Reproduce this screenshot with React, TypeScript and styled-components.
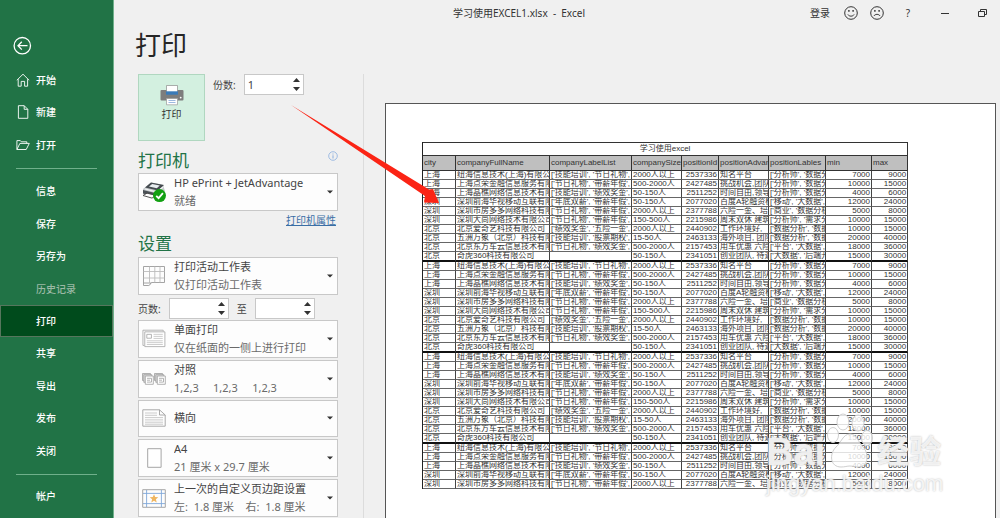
import React from 'react';
import styled, { createGlobalStyle } from 'styled-components';

const GlobalStyle = createGlobalStyle`
  *, *::before, *::after { box-sizing: border-box; }
  body {
    margin: 0;
    background: #f0f0f0;
    color: #444;
    font: 11px/16px "Noto Sans", "Noto Sans CJK SC", sans-serif;
  }
  button, input, select { font: inherit; color: inherit; }
  button { padding: 0; border: 0; background: none; }
`;

const Shell = styled.div`
  display: grid;
  grid-template-columns: 114px minmax(0, 1fr);
  min-height: 100vh;
`;

/* ---------- sidebar ---------- */

const Sidebar = styled.nav`
  display: flex;
  flex-direction: column;
  padding-top: 36px;
  background: #217346;
  border-right: 1px solid #6fb08a;
  color: #fff;
`;

const BackButton = styled.button`
  width: 20px;
  height: 20px;
  margin: 0 0 8px 12px;
  color: #fff;
  svg { display: block; }
`;

const NavGroup = styled.div<{ $height: number }>`
  display: flex;
  flex-direction: column;
  height: ${(p) => p.$height}px;
`;

const NavItem = styled.button<{ $active?: boolean; $muted?: boolean }>`
  flex: 1;
  display: grid;
  grid-template-columns: 14px 1fr;
  gap: 6px;
  align-items: center;
  padding-left: 15px;
  border: 1px solid ${(p) => (p.$active ? '#56765d' : 'transparent')};
  background: ${(p) => (p.$active ? '#004b1c' : 'none')};
  color: ${(p) => (p.$muted ? '#9bb9a5' : '#fff')};
  font-size: 10px;
  font-weight: 500;
  line-height: 14px;
  text-align: left;
`;

const NavRule = styled.hr`
  width: 81px;
  height: 1px;
  margin: 7px 16px 6px;
  border: 0;
  background: #70b08b;
`;

/* ---------- title bar ---------- */

const Main = styled.main`
  position: relative;
  display: flex;
  flex-direction: column;
  min-width: 0;
`;

const TitleBar = styled.header`
  display: flex;
  align-items: center;
  justify-content: space-between;
  height: 26px;
  padding-left: 339px;
  font-size: 10px;
  color: #333;
  white-space: pre;
`;

const WindowControls = styled.div`
  display: flex;
  align-items: center;
`;

const BarButton = styled.button<{ $width: number }>`
  display: flex;
  align-items: center;
  justify-content: center;
  width: ${(p) => p.$width}px;
  height: 26px;
`;

const PageTitle = styled.h1`
  margin: 0 0 10px 21px;
  height: 38px;
  color: #262626;
  font-size: 26px;
  font-weight: 400;
  line-height: 38px;
`;

const Workspace = styled.div`
  flex: 1;
  display: flex;
  min-width: 0;
`;

/* ---------- settings column ---------- */

const Settings = styled.section`
  width: 250px;
  flex: none;
  padding: 0 25px 1px 24px;
  border-right: 1px solid #dcdcdc;
`;

const PrintRow = styled.div`
  display: flex;
  align-items: flex-start;
  gap: 8px;
`;

const PrintButton = styled.button`
  display: flex;
  flex-direction: column;
  align-items: center;
  width: 67px;
  height: 67px;
  padding-top: 9px;
  border: 1px solid #b0d7c0;
  background: #d3f0e0;
  color: #333;
  font-size: 10px;
`;

const Field = styled.div`
  display: flex;
  align-items: center;
  gap: 8px;
  font-size: 10px;
`;

const SpinBox = styled.span`
  display: flex;
  width: 60px;
  height: 21px;
  border: 1px solid #c8c8c8;
  background: #fff;
`;

const SpinInput = styled.input`
  flex: 1;
  width: 100%;
  min-width: 0;
  padding: 0 3px;
  border: 0;
  outline: 0;
  background: none;
  font-size: 11px;
`;

const SpinButtons = styled.span`
  display: flex;
  flex-direction: column;
  width: 13px;
  padding: 1px 0;
`;

const SpinButton = styled.button`
  flex: 1;
  display: flex;
  align-items: center;
  justify-content: center;
`;

const SectionHeading = styled.h2`
  display: flex;
  align-items: center;
  justify-content: space-between;
  height: 26px;
  margin: 0;
  color: #217346;
  font-size: 17px;
  font-weight: 400;
  line-height: 26px;
`;

const PrinterHeading = styled(SectionHeading)`
  height: 32px;
  padding-top: 7px;
  svg { margin-bottom: 10px; }
`;

const LinkRow = styled.div`
  height: 20px;
  padding: 1px 2px 0 0;
  text-align: right;
  font-size: 10px;
  a { color: #3a6ea5; text-underline-offset: 1px; }
`;

const PickerBox = styled.div`
  display: grid;
  grid-template-columns: 24px minmax(0, 1fr) 6px;
  gap: 8px;
  align-items: center;
  height: 38px;
  padding: 0 4px 0 3px;
  border: 1px solid #c8c8c8;
  background: #fdfdfd;
  svg { display: block; margin: auto; }
`;

const PickerText = styled.div`
  display: flex;
  flex-direction: column;
  gap: 2px;
`;

const PickerSelect = styled.select`
  appearance: none;
  width: 100%;
  height: 16px;
  padding: 0;
  border: 0;
  outline: 0;
  background: none;
  line-height: 16px;
`;

const PickerNote = styled.span`
  color: #6a6a6a;
  white-space: pre;
`;

const PagesRow = styled(Field)`
  margin: 3px 0 1px;
`;

const PickerStack = styled.div`
  display: grid;
  grid-auto-rows: 1fr;
  gap: 2px;
  height: 197px;
  ${PickerBox} { height: auto; min-height: 0; }
`;

/* ---------- preview ---------- */

const Preview = styled.section`
  flex: 1;
  display: flex;
  min-width: 0;
  padding: 29px 4px 0 21px;
`;

const Paper = styled.div`
  flex: 1;
  min-width: 0;
  padding: 38px 88px 0 36px;
  border: solid #555;
  border-width: 1px 1px 0 1px;
  background: #fff;
`;

const Sheet = styled.table`
  width: 100%;
  table-layout: fixed;
  border-collapse: separate;
  border-spacing: 0;
  border-left: 1px solid #222;
  color: #333;
  font: 8px/8px "Liberation Sans", "Noto Sans CJK SC", sans-serif;
`;

const SheetTitle = styled.th`
  height: 14px;
  padding: 0;
  border: 1px solid #333;
  border-left: 0;
  font-weight: 400;
`;

const HeadCell = styled.th`
  height: 15px;
  padding: 0 1px;
  overflow: hidden;
  border: solid #333;
  border-width: 0 1px 1px 0;
  background: #bfbfbf;
  font-weight: 400;
  text-align: left;
  white-space: nowrap;
`;

const Cell = styled.td<{ $right?: boolean; $last?: boolean }>`
  height: ${(p) => (p.$last ? 10 : 9)}px;
  padding: 0 1px;
  overflow: hidden;
  border: solid #444;
  border-width: 0 1px ${(p) => (p.$last ? 2 : 1)}px 0;
  border-bottom-color: ${(p) => (p.$last ? '#111' : '#666')};
  text-align: ${(p) => (p.$right ? 'right' : 'left')};
  white-space: nowrap;
`;

/* ---------- overlays ---------- */

const Pointer = styled.svg`
  position: absolute;
  left: 176px;
  top: 104px;
  pointer-events: none;
`;

const Watermark = styled.div`
  position: absolute;
  left: 652px;
  top: 410px;
  width: 186px;
  pointer-events: none;
  color: rgba(255, 255, 255, 0.8);
  font-family: "Liberation Sans", "Noto Sans CJK SC", sans-serif;
  text-shadow: 0 0 2px #b5b5b5;
`;

const WatermarkLogo = styled.div`
  display: flex;
  align-items: flex-end;
  height: 60px;
  font-size: 38px;
  font-weight: 700;
  line-height: 36px;
  svg { margin: 0 4px 1px 2px; }
`;

const WatermarkBrand = styled.span`
  font-size: 32px;
`;

const WatermarkUrl = styled.div`
  font-size: 22px;
  line-height: 28px;
`;

/* ---------- icons ---------- */

const stroke = { fill: 'none', stroke: 'currentColor' } as const;

const BackIcon = () => (
  <svg width="20" height="20" viewBox="0 0 20 20" {...stroke} strokeWidth="1.3">
    <circle cx="10.3" cy="9.7" r="8.2" />
    <path d="M15.5 9.7H6M9.8 5.8 6 9.7l3.8 3.9" />
  </svg>
);
const HomeIcon = () => (
  <svg width="14" height="14" viewBox="0 0 14 14" {...stroke} strokeWidth="0.9">
    <path d="M.8 7.3 7 1.2l6.2 6.1M2.2 6.2v7h3V8.4h3.4v4.8h3V6.2" />
  </svg>
);
const FileIcon = () => (
  <svg width="14" height="14" viewBox="0 0 14 14" {...stroke} strokeWidth="0.9">
    <path d="M2.4.7h5.8l3.6 3.6v9H2.4zM8.2.7v3.6h3.6" />
  </svg>
);
const FolderIcon = () => (
  <svg width="14" height="14" viewBox="0 0 14 14" {...stroke} strokeWidth="0.9">
    <path d="M.9 11.5V2.6h3.4l1 1.2h5.5v1.6M.9 11.5l3-6.1h9.4l-3.1 6.1z" />
  </svg>
);
const FaceIcon = ({ sad }: { sad?: boolean }) => (
  <svg width="14" height="14" viewBox="0 0 14 14" {...stroke} strokeWidth="1">
    <circle cx="7" cy="7" r="6.3" />
    <path d={sad ? 'M3.9 10c1.3-2.2 4.9-2.2 6.2 0' : 'M3.9 8.5c1.3 2.2 4.9 2.2 6.2 0'} />
    <path d="M4.9 4v1.7M9.1 4v1.7" strokeWidth="1.4" />
  </svg>
);
const MinimizeIcon = () => (
  <svg width="10" height="10" viewBox="0 0 10 10" {...stroke}>
    <path d="M1 5.5h8" />
  </svg>
);
const RestoreIcon = () => (
  <svg width="10" height="10" viewBox="0 0 10 10" {...stroke}>
    <path d="M1.500 3.500h6v5h-6zM3.500 3V1.500h6v5H8" />
  </svg>
);
const UpIcon = () => (
  <svg width="7" height="4" viewBox="0 0 7 4"><path d="M0 4 3.5 0 7 4z" fill="#333" /></svg>
);
const DownIcon = () => (
  <svg width="7" height="4" viewBox="0 0 7 4"><path d="M0 0h7L3.5 4z" fill="#333" /></svg>
);
const CaretIcon = () => (
  <svg width="6" height="4" viewBox="0 0 6 4"><path d="M0 .5h6L3 3.6z" fill="#333" /></svg>
);
const InfoIcon = () => (
  <svg width="10" height="10" viewBox="0 0 10 10" fill="none" stroke="#8aaede">
    <circle cx="5" cy="5" r="4.3" strokeWidth="0.8" />
    <path d="M5 4.3v3.2M5 2.5v1" />
  </svg>
);
const PrintIcon = () => (
  <svg width="24" height="22" viewBox="0 0 24 22">
    <rect x="0.5" y="6" width="23" height="10.5" rx="1" fill="#7d7d7d" />
    <path d="M6.5 1.5h11v8h-11z" fill="#fff" stroke="#8d8d8d" strokeWidth="0.7" />
    <path d="M6 7.3h12v3.4H6z" fill="#3a7ab8" />
    <path d="M6.5 14.5h11v6.3h-11z" fill="#fff" stroke="#9a9a9a" strokeWidth="0.7" />
    <path d="M8.5 16.5h7M8.5 18.5h7" stroke="#9db9e0" />
    <circle cx="20.7" cy="13.6" r="0.9" fill="#fff" />
  </svg>
);
const DeviceIcon = () => (
  <svg width="24" height="22" viewBox="0 0 24 22">
    <path d="M1 8 9 1.5 21 4l2 6-7 7L1 13z" fill="#c4c8cb" />
    <path d="m3 6.500 6-5L22 4l-6 5.500z" fill="#454b50" />
    <path d="m7 5.600 3.200-2.500 7.600 1.500-3 2.600z" fill="#e8edf0" />
    <path d="m1 9 14 3.400V16L1 12.600z" fill="#4b5156" />
    <path d="m1 14.500 4-2.300 9 2.200-4 2.700z" fill="#fff" stroke="#444" strokeWidth="0.9" />
    <path d="m3 8 12 3 6-5" fill="none" stroke="#f1f3f4" strokeWidth="1.2" />
    <circle cx="17.5" cy="14.6" r="6.5" fill="#12a012" />
    <path d="m14.2 14.8 2.4 2.4 4.3-5" fill="none" stroke="#fff" strokeWidth="1.8" />
  </svg>
);
const SheetIcon = () => (
  <svg width="24" height="22" viewBox="0 0 24 22" fill="none" stroke="#9a9a9a" strokeWidth="0.9">
    <path d="M1.5 20.5V1.5h21v16H9.5c-1 0-1.2 3-2.7 3zM1.5 18h8" />
    <path d="M1.5 6.5h21M1.5 13h21M7.5 1.5V18M12.8 1.5v16M18 1.5v16" stroke="#bcbcbc" />
  </svg>
);
const OneSideIcon = () => (
  <svg width="24" height="19" viewBox="0 0 26 20" fill="none" stroke="#a5a5a5" strokeWidth="0.9">
    <path d="M2.5 17.5H1V1h22v1.5" />
    <path d="M3 2.8h21.8v16H3z" fill="#fff" />
    <path d="M5.2 5.5h5v4.2h-5z" />
    <path d="M12.5 5.5h10M12.5 7.7h10M12.5 9.9h10M5.2 12.5h17.3M5.2 14.5h17.3M5.2 16.5h17.3" stroke="#c2c2c2" />
  </svg>
);
const CollateIcon = () => (
  <svg width="24" height="12" viewBox="0 0 24 12" stroke="#a0a0a0" strokeWidth="0.8">
    {[0, 12].map((x) => (
      <g key={x} transform={`translate(${x})`} fill="#ddd">
        <path d="M.5.5h8v7h-8z" />
        <path d="M1.8 1.7h8v7.6h-8z" />
        <path d="M3.3 3h8v8.3h-8z" fill="#fff" />
        <path d="M5 5.3h4.5v3.8H5M5 7.2h3" fill="none" />
      </g>
    ))}
  </svg>
);
const LandscapeIcon = () => (
  <svg width="24" height="18" viewBox="0 0 24 18" fill="none" stroke="#a0a0a0" strokeWidth="0.9">
    <path d="M.8.8h16.7L23.2 6v11.2H.8z" />
    <path d="M17.5.8V6h5.7" />
    <path d="M3 4h12M3 6.3h12M3 8.6h18M3 10.9h18M3 13.2h18M3 15.2h18" stroke="#c5c5c5" />
  </svg>
);
const PaperIcon = () => (
  <svg width="15" height="20" viewBox="0 0 15 20">
    <path d="M.7.7h13.4v18.6H.7z" fill="#fff" stroke="#a5a5a5" />
  </svg>
);
const MarginsIcon = () => (
  <svg width="24" height="19" viewBox="0 0 24 19" fill="none">
    <path d="M.7.7h22.6v17.6H.7z" stroke="#a5a5a5" />
    <path d="M4.6 1v17M19.4 1v17M1 4.4h22M1 14.6h22" stroke="#7ea6d8" strokeWidth="0.9" />
    <path d="m12 5.2 1.2 2.9 3.1.2-2.4 2 .8 3.1-2.7-1.7-2.7 1.7.8-3.1-2.4-2 3.1-.2z" fill="#efb661" />
  </svg>
);
const PawIcon = () => (
  <svg width="46" height="56" viewBox="0 0 46 56" fill="#fff" fillOpacity="0.8" stroke="#cfcfcf">
    <ellipse cx="16" cy="9" rx="6" ry="8" />
    <ellipse cx="31" cy="10" rx="6" ry="8" />
    <ellipse cx="6" cy="22" rx="5.5" ry="7.5" />
    <ellipse cx="40" cy="25" rx="5.5" ry="7.5" />
    <path d="M23 21c7 0 8 8 13 13 6 6 6 20-5 20-4 0-5-1-8-1s-5 1-9 1C3 54 2 41 9 34c5-4 7-13 14-13z" />
  </svg>
);

/* ---------- data ---------- */

const columns: [string, number][] = [
  ['city', 33], ['companyFullName', 94], ['companyLabelList', 82], ['companySize', 50],
  ['positionId', 37], ['positionAdvantage', 50], ['positionLables', 57], ['min', 46], ['max', 36],
];

const companies: string[][] = [
  ['上海', '纽海信息技术(上海)有限公司', "['技能培训', '节日礼物',", '2000人以上', '2537336', '知名平台', "['分析师', '数据分析']", '7000', '9000'],
  ['上海', '上海点荣金融信息服务有限公司', "['节日礼物', '带薪年假',", '500-2000人', '2427485', '挑战机会,团队好', "['分析师', '数据分析']", '10000', '15000'],
  ['上海', '上海晶樵网络信息技术有限公司', "['技能培训', '绩效奖金',", '50-150人', '2511252', '时间自由,领导好', "['分析师', '数据分析']", '4000', '6000'],
  ['深圳', '深圳前海华视移动互联有限公司', "['年底双薪', '带薪年假',", '50-150人', '2077020', '百度A轮融资模式', "['移动', '大数据',", '12000', '24000'],
  ['深圳', '深圳市房多多网络科技有限公司', "['节日礼物', '带薪年假',", '2000人以上', '2377788', '六险一金、培训', "['商业', '数据分析']", '5000', '8000'],
  ['深圳', '深圳大尚网络技术有限公司', "['节日礼物', '带薪年假',", '150-500人', '2215986', '周末双休 建筑', "['分析师', '需求分析']", '10000', '15000'],
  ['北京', '北京爱奇艺科技有限公司', "['绩效奖金', '五险一金',", '2000人以上', '2440902', '工作环境好,', "['数据分析', '数据']", '10000', '15000'],
  ['北京', '五洲万象（北京）科技有限公司', "['技能培训', '股票期权',", '15-50人', '2463133', '海外项目, 团队', "['数据分析', '数据']", '20000', '40000'],
  ['北京', '北京东方车云信息技术有限公司', "['节日礼物', '绩效奖金',", '500-2000人', '2157453', '用车优惠 六险', "['平台', '大数据',", '18000', '36000'],
  ['北京', '奇虎360科技有限公司', '', '50-150人', '2341051', '创业团队, 待遇', "['大数据', '后端开发']", '15000', '30000'],
];

const rows = [...companies, ...companies, ...companies, ...companies.slice(0, 5)];

/* ---------- parts ---------- */

function Spin({ id, value }: { id: string; value?: string }) {
  return (
    <SpinBox>
      <SpinInput id={id} inputMode="numeric" defaultValue={value} />
      <SpinButtons>
        <SpinButton type="button" aria-label="增加"><UpIcon /></SpinButton>
        <SpinButton type="button" aria-label="减少"><DownIcon /></SpinButton>
      </SpinButtons>
    </SpinBox>
  );
}

function Picker({ icon, name, value, note }: { icon: React.ReactNode; name: string; value: string; note?: string }) {
  return (
    <PickerBox>
      {icon}
      <PickerText>
        <PickerSelect aria-label={name}>
          <option>{value}</option>
        </PickerSelect>
        {note && <PickerNote>{note}</PickerNote>}
      </PickerText>
      <CaretIcon />
    </PickerBox>
  );
}

export default function App() {
  return (
    <>
      <GlobalStyle />
      <Shell>
        <Sidebar>
          <BackButton type="button" aria-label="返回"><BackIcon /></BackButton>
          <NavGroup $height={97}>
            <NavItem type="button"><HomeIcon />开始</NavItem>
            <NavItem type="button"><FileIcon />新建</NavItem>
            <NavItem type="button"><FolderIcon />打开</NavItem>
          </NavGroup>
          <NavRule />
          <NavGroup $height={292}>
            {['信息', '保存', '另存为', '历史记录', '打印', '共享', '导出', '发布', '关闭'].map((t) => (
              <NavItem type="button" key={t} $active={t === '打印'} $muted={t === '历史记录'}>
                <span />{t}
              </NavItem>
            ))}
          </NavGroup>
          <NavRule />
          <NavGroup $height={30}>
            <NavItem type="button"><span />帐户</NavItem>
          </NavGroup>
        </Sidebar>

        <Main>
          <TitleBar>
            <span>学习使用EXCEL1.xlsx  -  Excel</span>
            <WindowControls>
              <BarButton type="button" $width={36}>登录</BarButton>
              <BarButton type="button" $width={26} aria-label="微笑"><FaceIcon /></BarButton>
              <BarButton type="button" $width={26} aria-label="不满"><FaceIcon sad /></BarButton>
              <BarButton type="button" $width={36}>?</BarButton>
              <BarButton type="button" $width={38} aria-label="最小化"><MinimizeIcon /></BarButton>
              <BarButton type="button" $width={36} aria-label="还原"><RestoreIcon /></BarButton>
            </WindowControls>
          </TitleBar>
          <PageTitle>打印</PageTitle>

          <Workspace>
            <Settings>
              <PrintRow>
                <PrintButton type="button"><PrintIcon />打印</PrintButton>
                <Field>
                  <label htmlFor="copies">份数:</label>
                  <Spin id="copies" value="1" />
                </Field>
              </PrintRow>
              <PrinterHeading>打印机<InfoIcon /></PrinterHeading>
              <Picker icon={<DeviceIcon />} name="打印机" value="HP ePrint + JetAdvantage" note="就绪" />
              <LinkRow><a href="#printer">打印机属性</a></LinkRow>
              <SectionHeading>设置</SectionHeading>
              <Picker icon={<SheetIcon />} name="打印范围" value="打印活动工作表" note="仅打印活动工作表" />
              <PagesRow>
                <label htmlFor="from">页数:</label>
                <Spin id="from" />
                <label htmlFor="to">至</label>
                <Spin id="to" />
              </PagesRow>
              <PickerStack>
                <Picker icon={<OneSideIcon />} name="单双面" value="单面打印" note="仅在纸面的一侧上进行打印" />
                <Picker icon={<CollateIcon />} name="排序" value="对照" note="1,2,3     1,2,3     1,2,3" />
                <Picker icon={<LandscapeIcon />} name="方向" value="横向" />
                <Picker icon={<PaperIcon />} name="纸张" value="A4" note="21 厘米 x 29.7 厘米" />
                <Picker icon={<MarginsIcon />} name="页边距" value="上一次的自定义页边距设置" note="左:  1.8 厘米    右:  1.8 厘米" />
              </PickerStack>
            </Settings>

            <Preview>
              <Paper>
                <Sheet>
                  <colgroup>
                    {columns.map(([name, width]) => <col key={name} width={width} />)}
                  </colgroup>
                  <thead>
                    <tr><SheetTitle colSpan={9}>学习使用excel</SheetTitle></tr>
                    <tr>{columns.map(([name]) => <HeadCell key={name}>{name}</HeadCell>)}</tr>
                  </thead>
                  <tbody>
                    {rows.map((row, r) => (
                      <tr key={r}>
                        {row.map((text, c) => (
                          <Cell key={c} $right={c === 4 || c > 6} $last={r % 10 === 9}>{text}</Cell>
                        ))}
                      </tr>
                    ))}
                  </tbody>
                </Sheet>
              </Paper>
            </Preview>
          </Workspace>

          <Pointer width="150" height="102" viewBox="0 0 150 102" aria-hidden="true">
            <path d="M1 1 139 85.500 143 85 149 99 134 98.500 135 92z" fill="#fb2415" />
          </Pointer>
          <Watermark aria-hidden="true">
            <WatermarkLogo>Bai<PawIcon /><WatermarkBrand>经验</WatermarkBrand></WatermarkLogo>
            <WatermarkUrl>jingyan.baidu.com</WatermarkUrl>
          </Watermark>
        </Main>
      </Shell>
    </>
  );
}
